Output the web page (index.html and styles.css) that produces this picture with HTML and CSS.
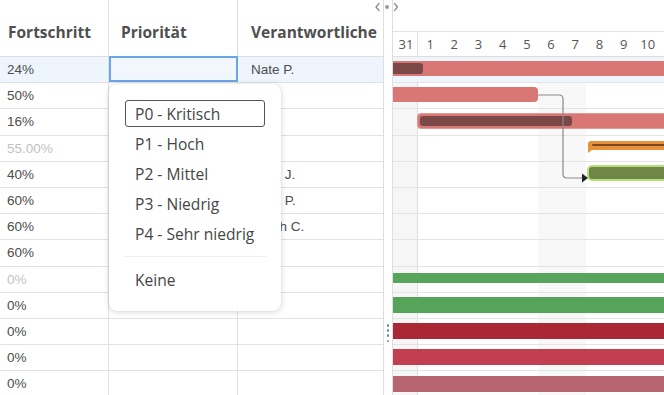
FILE: index.html
```html
<!DOCTYPE html>
<html lang="de">
<head>
<meta charset="utf-8">
<title>Gantt</title>
<link rel="stylesheet" href="styles.css">
</head>
<body>
<div class="app">
  <div class="grid">
    <div class="hrow">
      <div class="hcell c1">Fortschritt</div>
      <div class="hcell c2">Priorität</div>
      <div class="hcell c3">Verantwortliche</div>
    </div>
    <div class="row sel"><div class="cell c1">24%</div><div class="cell c2 editing"></div><div class="cell c3">Nate P.</div></div>
    <div class="row"><div class="cell c1">50%</div><div class="cell c2"></div><div class="cell c3"></div></div>
    <div class="row"><div class="cell c1">16%</div><div class="cell c2"></div><div class="cell c3"></div></div>
    <div class="row"><div class="cell c1 muted">55.00%</div><div class="cell c2"></div><div class="cell c3"></div></div>
    <div class="row"><div class="cell c1">40%</div><div class="cell c2"></div><div class="cell c3">Lena J.</div></div>
    <div class="row"><div class="cell c1">60%</div><div class="cell c2"></div><div class="cell c3">Mark P.</div></div>
    <div class="row"><div class="cell c1">60%</div><div class="cell c2"></div><div class="cell c3">Sarah C.</div></div>
    <div class="row"><div class="cell c1">60%</div><div class="cell c2"></div><div class="cell c3"></div></div>
    <div class="row"><div class="cell c1 muted">0%</div><div class="cell c2"></div><div class="cell c3"></div></div>
    <div class="row"><div class="cell c1">0%</div><div class="cell c2"></div><div class="cell c3"></div></div>
    <div class="row"><div class="cell c1">0%</div><div class="cell c2"></div><div class="cell c3"></div></div>
    <div class="row"><div class="cell c1">0%</div><div class="cell c2"></div><div class="cell c3"></div></div>
    <div class="row"><div class="cell c1">0%</div><div class="cell c2"></div><div class="cell c3"></div></div>
  </div>

  <div class="splitter">
    <div class="handle"><span></span><span></span><span></span><span></span></div>
  </div>

  <div class="gantt">
    <div class="g-top"></div>
    <div class="g-dates">
      <div class="day first">31</div>
      <div class="day">1</div><div class="day">2</div><div class="day">3</div><div class="day">4</div>
      <div class="day">5</div><div class="day">6</div><div class="day">7</div><div class="day">8</div>
      <div class="day">9</div><div class="day">10</div>
    </div>
    <div class="g-body">
      <div class="shade s31"></div>
      <div class="shade weekend"></div>
      <div class="grow sel"><div class="bar b0"><div class="prog p0"></div></div></div>
      <div class="grow"><div class="bar b1"></div></div>
      <div class="grow"><div class="bar b2"><div class="prog p2"></div></div></div>
      <div class="grow"><div class="bar b3"><div class="inner3"></div></div></div>
      <div class="grow"><div class="bar b4"></div></div>
      <div class="grow"></div>
      <div class="grow"></div>
      <div class="grow"></div>
      <div class="grow"><div class="bar b8"></div></div>
      <div class="grow"><div class="bar b9"></div></div>
      <div class="grow"><div class="bar b10"></div></div>
      <div class="grow"><div class="bar b11"></div></div>
      <div class="grow"><div class="bar b12"></div></div>
      <svg class="links" width="272" height="340" viewBox="0 0 272 340">
        <path d="M145 38 H166 Q170 38 170 42 V117 Q170 121 174 121 H190" fill="none" stroke="#8a8a8a" stroke-width="1.2"/>
        <polygon points="189,116.5 195,121 189,125.5" fill="#222"/>
      </svg>
    </div>
  </div>

  <svg class="toggles" width="30" height="14" viewBox="0 0 30 14">
    <path d="M6 3.5 L3 7 L6 10.5" fill="none" stroke="#8c8c8c" stroke-width="1.3" stroke-linecap="round" stroke-linejoin="round"/>
    <circle cx="14" cy="7" r="2" fill="#9a9a9a"/>
    <path d="M21.5 3.5 L24.5 7 L21.5 10.5" fill="none" stroke="#8c8c8c" stroke-width="1.3" stroke-linecap="round" stroke-linejoin="round"/>
  </svg>

  <div class="menu">
    <div class="item focus">P0 - Kritisch</div>
    <div class="item">P1 - Hoch</div>
    <div class="item">P2 - Mittel</div>
    <div class="item">P3 - Niedrig</div>
    <div class="item">P4 - Sehr niedrig</div>
    <div class="sep"></div>
    <div class="item">Keine</div>
  </div>
</div>
</body>
</html>
```

FILE: styles.css
```css
* { box-sizing: border-box; }
html, body { margin: 0; padding: 0; background: #fff; }
body { width: 664px; height: 395px; overflow: hidden; }

.app {
  position: relative;
  display: flex;
  width: 664px;
  height: 395px;
  overflow: hidden;
}

/* ---------- left grid ---------- */
.grid {
  width: 384px;
  flex: none;
  border-right: 1px solid #dedede;
  font-family: "Liberation Sans", Arial, sans-serif;
  font-size: 13.5px;
  color: #4d4d4d;
}
.hrow, .row {
  display: grid;
  grid-template-columns: 109px 129px 145px;
}
.hrow { height: 57px; border-bottom: 1px solid #dedede; }
.row { height: 26.2px; border-bottom: 1px solid #e2e2e2; }
.row.sel { background: #eef5fd; }

.hcell {
  border-right: 1px solid #dedede;
  display: flex;
  align-items: center;
  padding-top: 8px;
  font-family: "Open Sans", sans-serif;
  font-weight: 700;
  font-size: 15.5px;
  color: #4f4f4f;
  white-space: nowrap;
}
.hcell.c1 { padding-left: 8px; }
.hcell.c2 { padding-left: 12px; }
.hcell.c3 { padding-left: 13px; border-right: none; }

.cell {
  border-right: 1px solid #e2e2e2;
  display: flex;
  align-items: center;
  white-space: nowrap;
  overflow: hidden;
}
.cell.c1 { padding-left: 7px; }
.cell.c3 { padding-left: 13px; border-right: none; }
.cell.muted { color: #c2c2c2; }
.cell.editing {
  border: 2px solid #6aa5e8;
  background: #f2f7fe;
  margin: -1px 0 0 0;
}

/* ---------- splitter ---------- */
.splitter {
  width: 8px;
  flex: none;
  display: flex;
  flex-direction: column;
  align-items: center;
  padding-top: 324px;
}
.handle { display: flex; flex-direction: column; gap: 2.6px; }
.handle span {
  width: 2.6px; height: 2.6px; border-radius: 50%;
  background: #6f8db3;
}

/* ---------- gantt ---------- */
.gantt {
  flex: 1;
  border-left: 1px solid #dedede;
  position: relative;
  overflow: hidden;
  font-family: "Open Sans", sans-serif;
}
.g-top { height: 32px; border-bottom: 1px solid #e3e3e3; }
.g-dates {
  height: 25px;
  border-bottom: 1px solid #dedede;
  display: flex;
  font-size: 13px;
  color: #555;
}
.day {
  flex: none;
  width: 24.2px;
  display: flex;
  align-items: center;
  justify-content: center;
}
.day.first { width: 25px; border-right: 1px solid #dedede; padding-left: 2px; }

.g-body { position: relative; }
.shade { position: absolute; top: 0; bottom: 0; }
.s31 { left: 0; width: 25px; background: #f6f6f6; border-right: 1px solid #dedede; }
.weekend { left: 145px; width: 48px; background: #f8f8f8; }

.grow {
  position: relative;
  height: 26.2px;
  border-bottom: 1px solid #e4e4e4;
}
.grow.sel { background: #eef5fd; }

.bar { position: absolute; border-radius: 4px; }
.prog { position: absolute; border-radius: 3px; }

.b0 { left: -10px; right: -10px; top: 4px; height: 15px; background: #d87774; }
.p0 { left: 0; top: 2px; width: 40px; height: 11px; background: #7c4747; }

.b1 { left: -10px; width: 155px; top: 4px; height: 15px; background: #d87774; }

.b2 { left: 24px; right: -10px; top: 4px; height: 16px; background: #d87774; border: 1px solid #e29996; }
.p2 { left: 2px; top: 2px; width: 152px; height: 10px; background: #7c4747; }

.b3 { left: 195px; right: -10px; top: 5px; height: 9px; background: #e8913b; border-radius: 3px 0 0 0; }
.b3::after {
  content: "";
  position: absolute;
  left: 0;
  top: 100%;
  border-top: 3px solid #e8913b;
  border-right: 4px solid transparent;
}
.inner3 { position: absolute; left: 4px; right: 0; top: 3px; height: 2.5px; background: #7b4a22; border-radius: 1px; }

.b4 { left: 194px; right: -10px; top: 3px; height: 16px; background: #6f8746; border: 2px solid #b6df7c; border-radius: 5px; }

.b8 { left: -10px; right: -10px; top: 6.4px; height: 10px; background: #57a55b; border-radius: 0; }
.b9 { left: -10px; right: -10px; top: 4.2px; height: 16px; background: #55a45a; border-radius: 0; }
.b10 { left: -10px; right: -10px; top: 4px; height: 16px; background: #aa2736; border-radius: 0; }
.b11 { left: -10px; right: -10px; top: 4px; height: 16px; background: #c13f50; border-radius: 0; }
.b12 { left: -10px; right: -10px; top: 4.6px; height: 16px; background: #b6646f; border-radius: 0; }

.links { position: absolute; left: 0; top: 0; overflow: visible; }

/* ---------- overlays ---------- */
.toggles {
  position: absolute;
  left: 373px;
  top: 0;
}

.menu {
  position: absolute;
  left: 109px;
  top: 84px;
  width: 172px;
  height: 227px;
  background: #fff;
  border-radius: 8px;
  box-shadow: 0 1px 6px rgba(0, 0, 0, 0.16), 0 0 1px rgba(0, 0, 0, 0.12);
  padding: 16px 16px 0 16px;
  font-family: "Open Sans", sans-serif;
  font-size: 15.6px;
  color: #454545;
}
.item {
  height: 27px;
  margin-bottom: 3px;
  padding-left: 9px;
  display: flex;
  align-items: center;
  border: 1.5px solid transparent;
  border-radius: 3px;
  white-space: nowrap;
}
.item.focus { border-color: #555; }
.sep { height: 1px; background: #efefef; margin: 9px -1px 9px -1px; }
```
